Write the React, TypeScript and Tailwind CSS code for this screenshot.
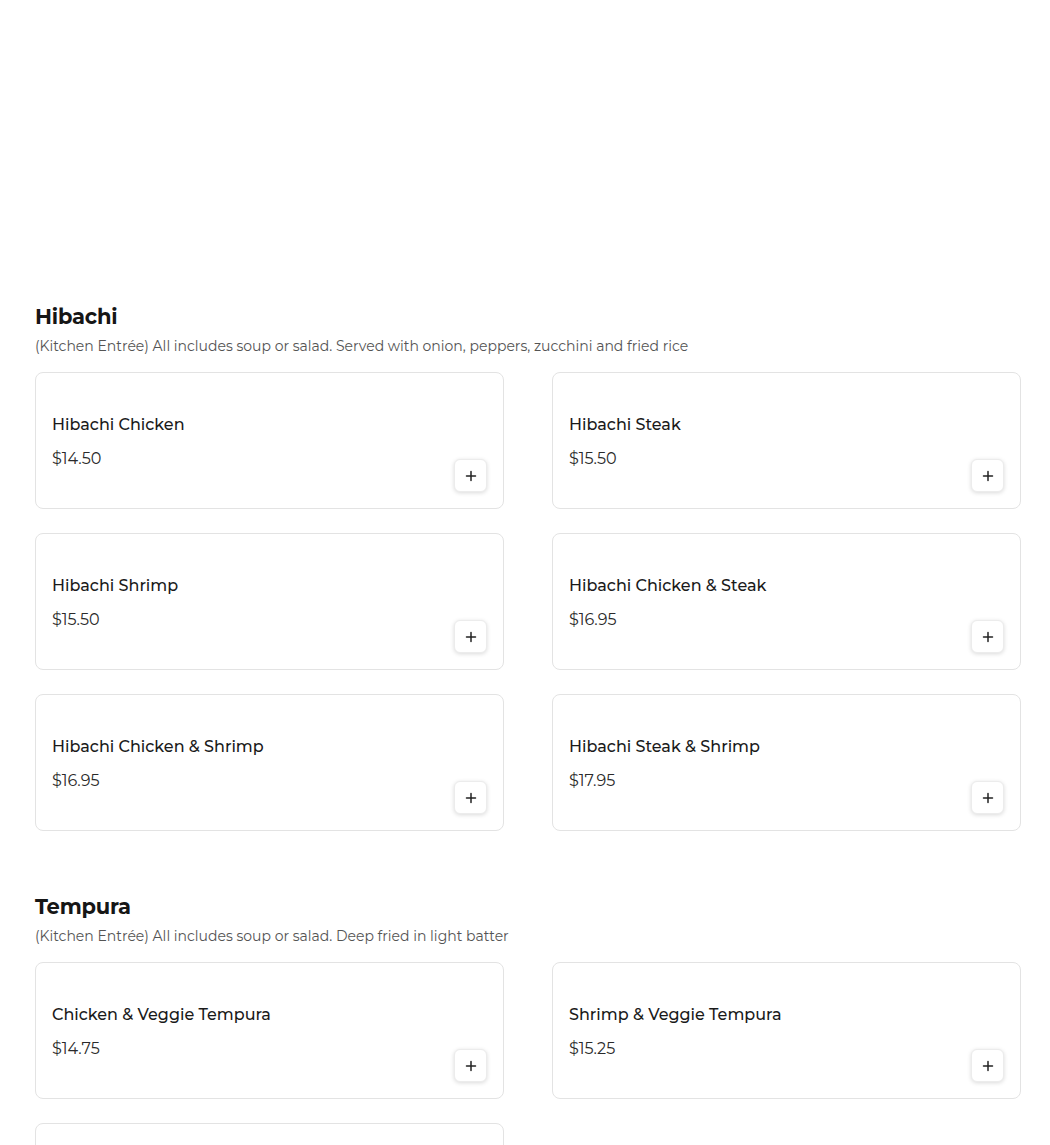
import React from "react";

type Item = { name: string; price: string };

const hibachi: Item[] = [
  { name: "Hibachi Chicken", price: "$14.50" },
  { name: "Hibachi Steak", price: "$15.50" },
  { name: "Hibachi Shrimp", price: "$15.50" },
  { name: "Hibachi Chicken & Steak", price: "$16.95" },
  { name: "Hibachi Chicken & Shrimp", price: "$16.95" },
  { name: "Hibachi Steak & Shrimp", price: "$17.95" },
];

const tempura: Item[] = [
  { name: "Chicken & Veggie Tempura", price: "$14.75" },
  { name: "Shrimp & Veggie Tempura", price: "$15.25" },
  { name: "Shrimp Tempura", price: "$15.25" },
];

function Card({ item }: { item: Item }) {
  return (
    <div className="h-[137px] rounded-lg border border-[#e3e3e3] bg-white px-4 pb-4 pt-[40px] flex justify-between items-end">
      <div className="self-start flex flex-col">
        <div className="text-[16px] leading-6 font-medium text-[#1a1a1a]">{item.name}</div>
        <div className="mt-[10px] text-[16px] leading-6 text-[#2a2a2a]">{item.price}</div>
      </div>
      <button className="w-[33px] h-[33px] rounded-md border border-[#ececec] bg-white shadow-[0_1px_4px_rgba(0,0,0,0.15)] flex items-center justify-center">
        <svg width="12" height="12" viewBox="0 0 12 12">
          <path d="M6 1.5v9M1.5 6h9" stroke="#222" strokeWidth="1.5" strokeLinecap="round" />
        </svg>
      </button>
    </div>
  );
}

function Section({ title, desc, items }: { title: string; desc: string; items: Item[] }) {
  return (
    <section>
      <h2 className="text-[21px] leading-7 font-bold text-[#161616] tracking-[-0.2px]">
        {title}
      </h2>
      <p className="mt-[5px] text-[14px] leading-5 text-[#545454]">{desc}</p>
      <div className="mt-[16px] grid grid-cols-2 gap-x-[48px] gap-y-[24px]">
        {items.map((it) => (
          <Card key={it.name} item={it} />
        ))}
      </div>
    </section>
  );
}

export default function App() {
  return (
    <div className="min-h-[1145px] bg-white" style={{ fontFamily: "'Montserrat', 'Open Sans', 'Noto Sans', sans-serif" }}>
      <div className="pl-[35px] pr-[29px] pt-[303px] flex flex-col gap-[62px]">
        <Section
          title="Hibachi"
          desc="(Kitchen Entrée) All includes soup or salad. Served with onion, peppers, zucchini and fried rice"
          items={hibachi}
        />
        <Section
          title="Tempura"
          desc="(Kitchen Entrée) All includes soup or salad. Deep fried in light batter"
          items={tempura}
        />
      </div>
    </div>
  );
}
